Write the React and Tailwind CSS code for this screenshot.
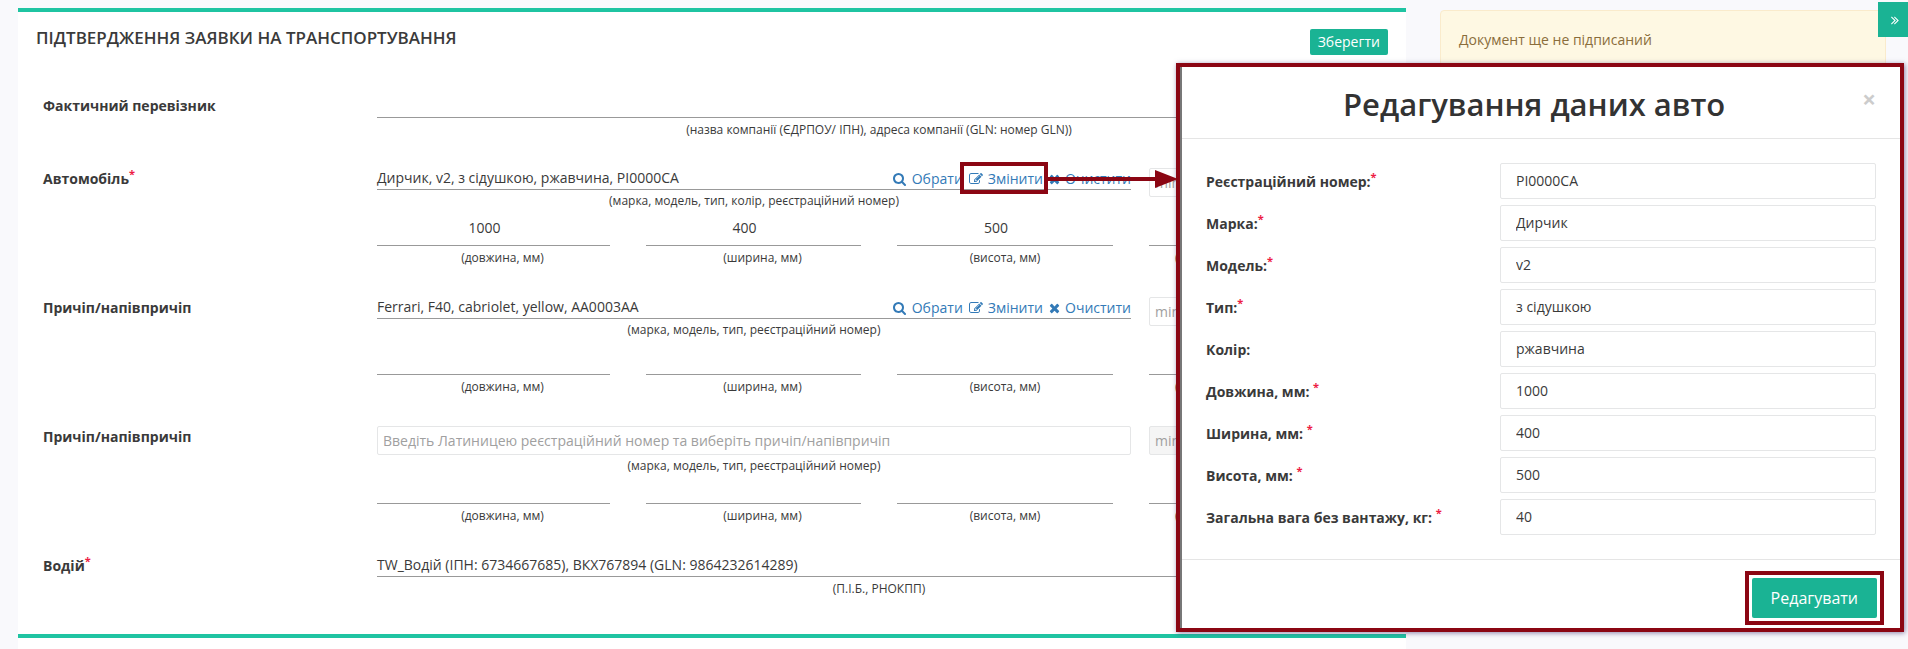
const glyphs = {
  search:
    "M1152 832q0-185-131.5-316.5t-316.5-131.5-316.5 131.5-131.5 316.5 131.5 316.5 316.5 131.5 316.5-131.5 131.5-316.5zm512 832q0 52-38 90t-90 38q-54 0-90-38l-343-342q-179 124-399 124-143 0-273.5-55.5t-225-150-150-225-55.5-273.5 55.5-273.5 150-225 225-150 273.5-55.5 273.5 55.5 225 150 150 225 55.5 273.5q0 220-124 399l343 343q37 37 37 90z",
  edit:
    "M888 1184l116-116-152-152-116 116v56h96v96h56zm440-720q-16-16-33 1l-350 350q-17 17-1 33t33-1l350-350q17-17 1-33zm80 594v190q0 119-84.5 203.5t-203.5 84.5h-832q-119 0-203.5-84.5t-84.5-203.5v-832q0-119 84.5-203.5t203.5-84.5h832q63 0 117 25 15 7 18 23 3 17-9 29l-49 49q-14 14-32 8-23-6-45-6h-832q-66 0-113 47t-47 113v832q0 66 47 113t113 47h832q66 0 113-47t47-113v-126q0-13 9-22l64-64q15-15 35-7t20 29zm-96-738l288 288-672 672h-288v-288zm444 132l-92 92-288-288 92-92q28-28 68-28t68 28l152 152q28 28 28 68t-28 68z",
  times:
    "M1490 1322q0 40-28 68l-136 136q-28 28-68 28t-68-28l-294-294-294 294q-28 28-68 28t-68-28l-136-136q-28-28-28-68t28-68l294-294-294-294q-28-28-28-68t28-68l136-136q28-28 68-28t68 28l294 294 294-294q28-28 68-28t68 28l136 136q28 28 28 68t-28 68l-294 294 294 294q28 28 28 68z",
  double:
    "M979 960q0 13-10 23l-466 466q-10 10-23 10t-23-10l-50-50q-10-10-10-23t10-23l393-393-393-393q-10-10-10-23t10-23l50-50q10-10 23-10t23 10l466 466q10 10 10 23zm384 0q0 13-10 23l-466 466q-10 10-23 10t-23-10l-50-50q-10-10-10-23t10-23l393-393-393-393q-10-10-10-23t10-23l50-50q10-10 23-10t23 10l466 466q10 10 10 23z",
};

function Icon({ name, box = "0 0 1792 1792", width = 14 }) {
  return (
    <svg aria-hidden="true" width={width} height="14" viewBox={box} fill="currentColor">
      <path d={glyphs[name]} />
    </svg>
  );
}

function Star() {
  return <sup className="top-[-6px] text-[11px] text-[#ed1c44]">*</sup>;
}

function Row({ label, required, className, children }) {
  return (
    <div className={"flex pt-[21px] " + (className || "")}>
      <div className="w-[334px] shrink-0 pt-px text-[14px] font-bold leading-5">
        {label}
        {required && <Star />}
      </div>
      <div className="min-w-0 flex-1">{children}</div>
    </div>
  );
}

function Hint({ className, children }) {
  return <div className={"text-center text-[12px] leading-[18px] " + (className || "")}>{children}</div>;
}

function Actions() {
  const link = "flex items-center gap-[5px] text-[#337ab7]";
  return (
    <div className="flex gap-1.5">
      <a href="#select" className={link}><Icon name="search" />Обрати</a>
      <a href="#edit" className={link}><Icon name="edit" />Змінити</a>
      <a href="#clear" className={link}><Icon name="times" width={11} box="192 0 1408 1792" />Очистити</a>
    </div>
  );
}

const inputLook =
  "block h-[29px] rounded-xs border border-[#e5e6e7] bg-white px-[5px] text-[14px] placeholder:text-[#a0a0a0] disabled:bg-[#f5f5f5]";

function Vehicle({ value, placeholder, hint, disabled }) {
  return (
    <div className="flex gap-[18px]">
      <div className="min-w-0 flex-1">
        {placeholder ? (
          <input aria-label="Причіп/напівпричіп" placeholder={placeholder} className={inputLook + " w-full"} />
        ) : (
          <div className="flex h-[22px] justify-between border-b border-[#999] text-[14px] leading-5">
            <span>{value}</span>
            <Actions />
          </div>
        )}
        <Hint className="mt-0.5">{hint}</Hint>
      </div>
      <input aria-label="Температура" placeholder="min" disabled={disabled} className={inputLook + " w-[232px]"} />
    </div>
  );
}

function Sizes({ values }) {
  const names = ["(довжина, мм)", "(ширина, мм)", "(висота, мм)", "(загальна вага без вантажу, кг)"];
  return (
    <div className="grid grid-cols-[233fr_215fr_216fr_232fr] gap-9">
      {names.map((n, i) => (
        <div key={n}>
          <div className="h-[29px] border-b border-[#999] pr-[18px] text-center text-[14px] leading-[22px]">{values?.[i]}</div>
          <Hint className={i < 2 ? "mt-[3px] pl-[18px]" : "mt-[3px]"}>{n}</Hint>
        </div>
      ))}
    </div>
  );
}

const fields = [
  ["Реєстраційний номер:", "PI0000CA", true],
  ["Марка:", "Дирчик", true],
  ["Модель:", "v2", true],
  ["Тип:", "з сідушкою", true],
  ["Колір:", "ржавчина", false],
  ["Довжина, мм: ", "1000", true],
  ["Ширина, мм: ", "400", true],
  ["Висота, мм: ", "500", true],
  ["Загальна вага без вантажу, кг: ", "40", true],
];

function Modal() {
  return (
    <div role="dialog" aria-labelledby="dlg" className="absolute right-1 top-[63px] w-[728px] border-4 border-[#8b0613] bg-white shadow-[1px_1px_5px_rgba(70,50,110,0.6)]">
      <div className="border-l-2 border-[#777]">
        <header className="flex h-[72px] items-center border-b border-[#e5e5e5] px-6">
          <h2 id="dlg" className="flex-1 pt-0.5 text-center text-[31px] font-semibold leading-9 text-[#333]">Редагування даних авто</h2>
          <button aria-label="Закрити" className="mb-2 text-[24px] font-bold leading-6 text-[#ccc]">×</button>
        </header>
        <form className="flex flex-col gap-1.5 px-6 py-6">
          {fields.map(([l, v, r], i) => (
            <div key={l} className="flex items-center">
              <label htmlFor={"f" + i} className="w-[294px] whitespace-pre pt-px text-[14px] font-bold leading-5">{l}{r && <Star />}</label>
              <input id={"f" + i} defaultValue={v} className="h-9 min-w-0 flex-1 rounded-xs border border-[#e5e6e7] px-[15px] pb-0.5 text-[14px]" />
            </div>
          ))}
        </form>
        <footer className="flex justify-end border-t border-[#e5e5e5] px-4 pb-[3px] pt-[11px]">
          <div className="border-4 border-[#8b0613] p-[3px]">
            <button className="block h-10 rounded-xs bg-[#1ab394] px-[19px] text-[16px] text-white">Редагувати</button>
          </div>
        </footer>
      </div>
    </div>
  );
}

export default function App() {
  return (
    <div className="relative min-h-screen overflow-hidden bg-[#f9f9fc] pl-[18px] pt-2 font-['Open_Sans',sans-serif] text-[#3a3a3a]">
      <div className="flex items-start gap-[34px]">
        <div className="min-w-0 flex-1">
          <main className="border-y-4 border-[#1fc4a2] bg-white px-[25px] pb-9">
            <div className="-mx-[7px] flex h-[62px] items-start justify-between pt-3.5">
              <h1 className="text-[17px] font-semibold leading-6">ПІДТВЕРДЖЕННЯ ЗАЯВКИ НА ТРАНСПОРТУВАННЯ</h1>
              <button className="mt-[3px] h-[26px] rounded-xs bg-[#1ab394] px-2 pb-px text-[14px] text-white">Зберегти</button>
            </div>
            <Row label="Фактичний перевізник" className="h-[73px]">
              <div className="h-[23px] border-b border-[#999]" />
              <Hint className="mt-[3px]">(назва компанії (ЄДРПОУ/ ІПН), адреса компанії (GLN: номер GLN))</Hint>
            </Row>
            <Row label="Автомобіль" required className="h-[129px]">
              <Vehicle value="Дирчик, v2, з сідушкою, ржавчина, PI0000CA" hint="(марка, модель, тип, колір, реєстраційний номер)" />
              <div className="mt-[7px]"><Sizes values={["1000", "400", "500", "40"]} /></div>
            </Row>
            <Row label="Причіп/напівпричіп" className="h-[129px]">
              <Vehicle value="Ferrari, F40, cabriolet, yellow, AA0003AA" hint="(марка, модель, тип, реєстраційний номер)" />
              <div className="mt-[7px]"><Sizes /></div>
            </Row>
            <Row label="Причіп/напівпричіп" className="h-[129px]">
              <Vehicle placeholder="Введіть Латиницею реєстраційний номер та виберіть причіп/напівпричіп" hint="(марка, модель, тип, реєстраційний номер)" disabled />
              <Sizes />
            </Row>
            <Row label="Водій" required>
              <div className="h-[22px] border-b border-[#999] text-[14px] leading-5">TW_Водій (ІПН: 6734667685), ВКХ767894 (GLN: 9864232614289)</div>
              <Hint className="mt-[3px]">(П.І.Б., РНОКПП)</Hint>
            </Row>
          </main>
          <div className="h-[11px] bg-white" />
        </div>
        <aside className="w-[468px] shrink-0 pr-[22px] pt-0.5">
          <div className="h-20 rounded-sm border border-[#faebcc] bg-[#fef8e3] px-[18px] pt-[19px] text-[14px] leading-5 text-[#8a6d3b]">Документ ще не підписаний</div>
        </aside>
      </div>
      <button aria-label="Розгорнути" className="absolute right-0 top-0.5 flex h-[35px] w-[30px] items-center justify-center bg-[#1ab394] pl-1 text-white">
        <Icon name="double" />
      </button>
      <Modal />
      <div className="absolute left-[960px] top-[162px] h-8 w-[88px] border-4 border-[#8b0613]" />
      <svg className="absolute left-[1047px] top-[169px]" width="131" height="20" fill="#8b0613">
        <path d="M0 8h108V1l23 9-23 9v-7H0z" />
      </svg>
    </div>
  );
}
